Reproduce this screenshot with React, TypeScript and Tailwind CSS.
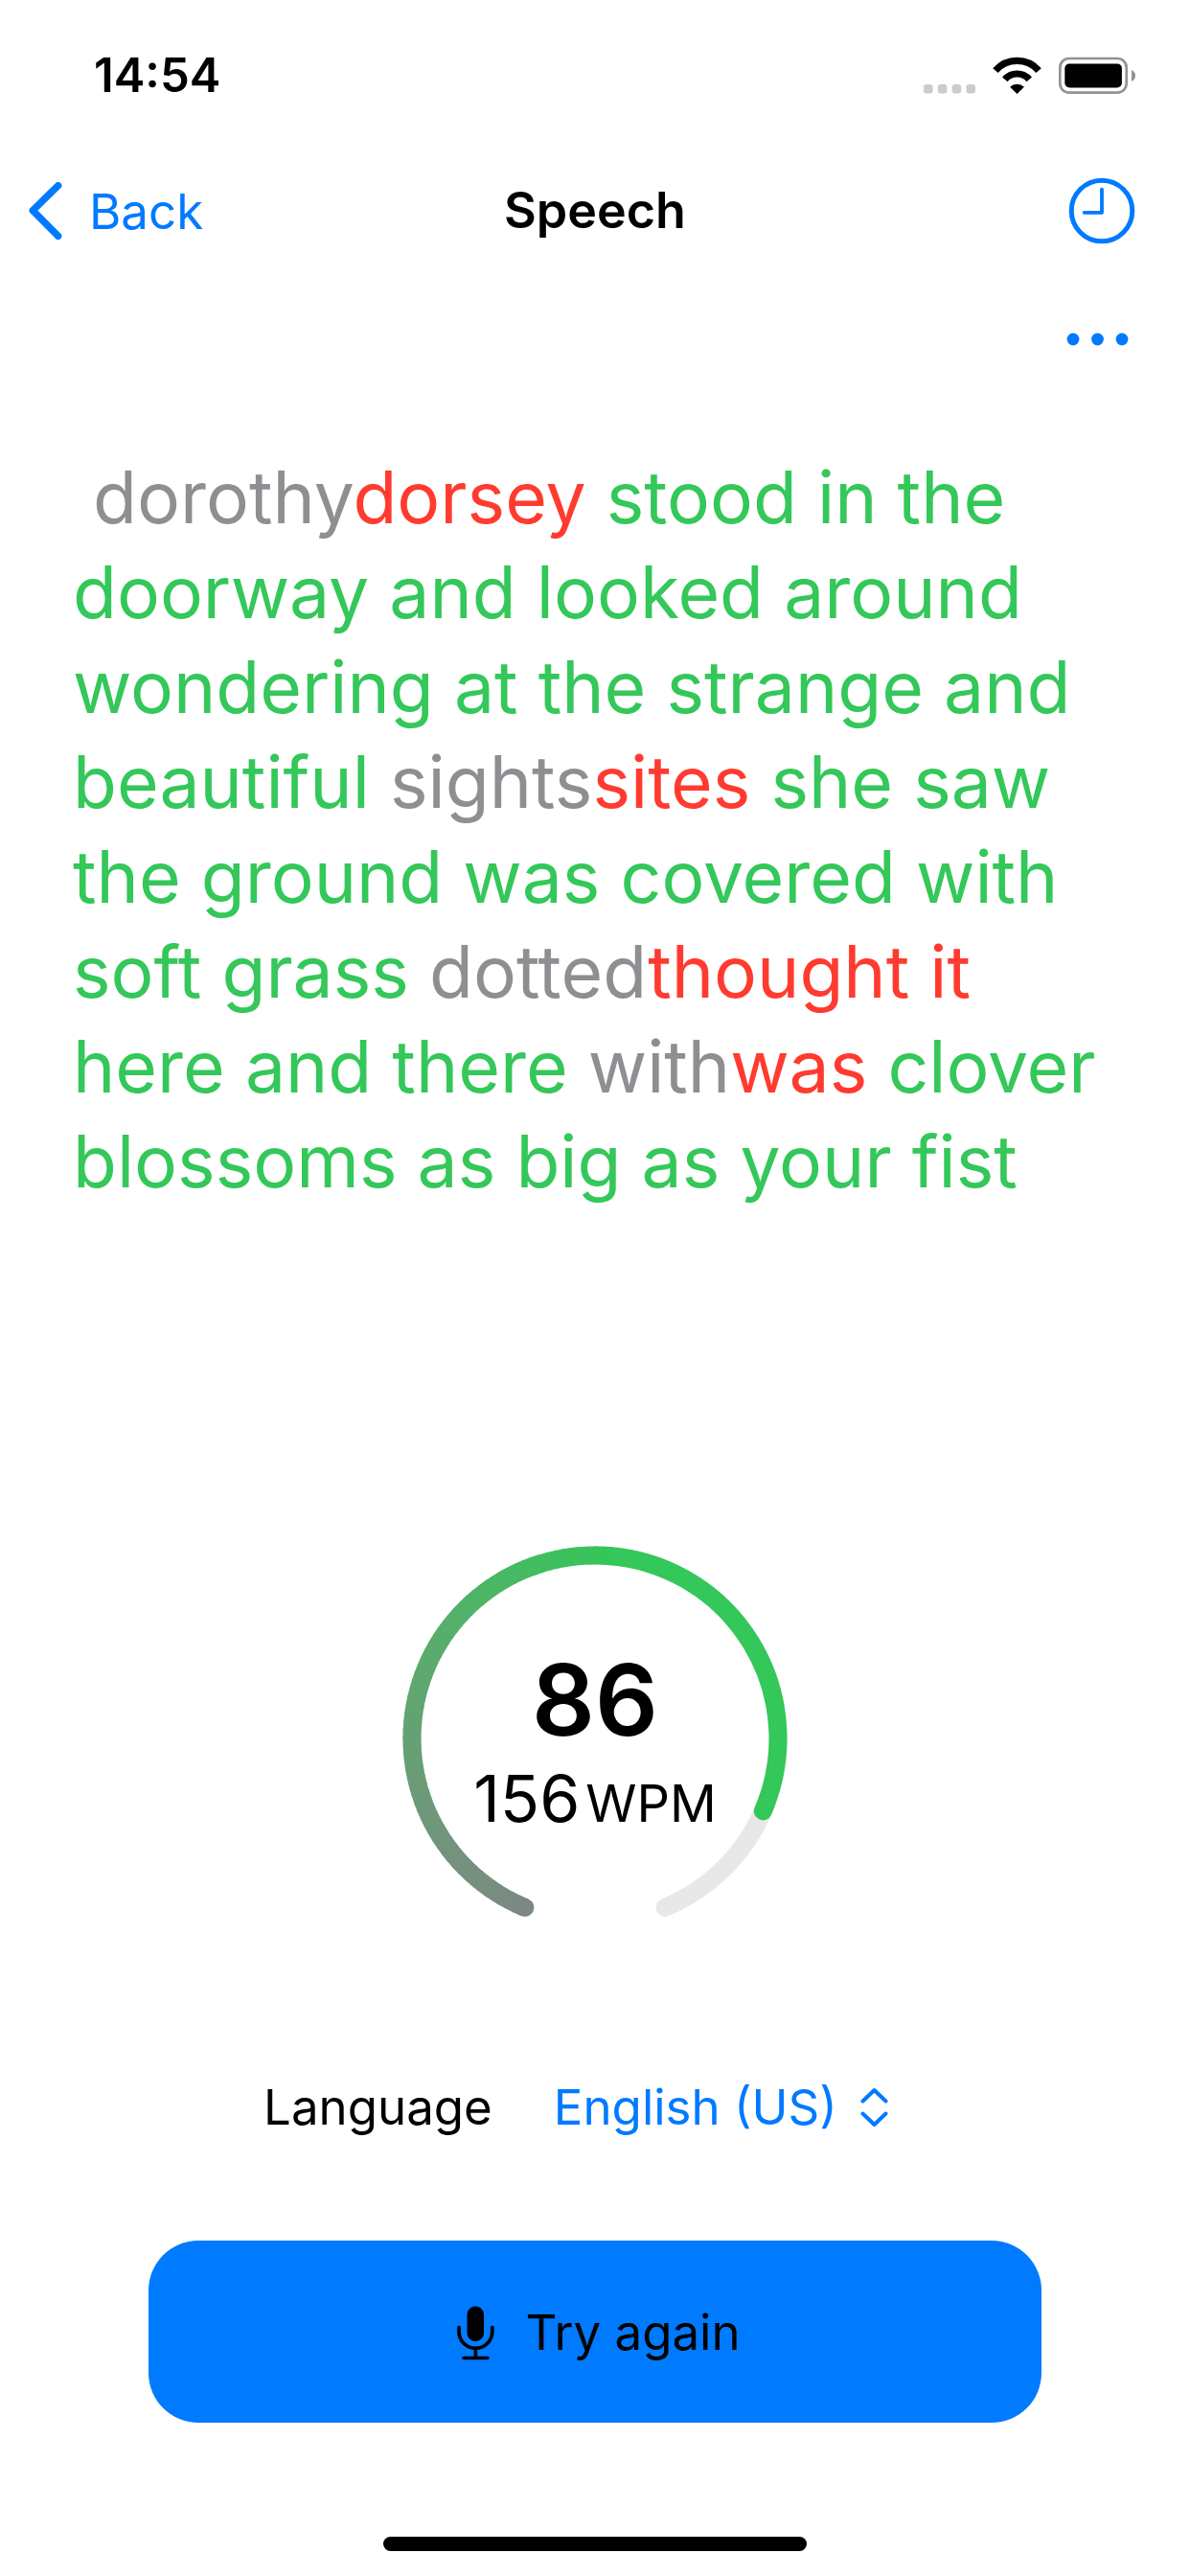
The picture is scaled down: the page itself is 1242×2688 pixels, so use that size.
import React from "react";

type Kind = "match" | "missed" | "heard";
type Segment = { kind: Kind; text: string };

const TRANSCRIPT: Segment[] = [
  { kind: "missed", text: " dorothy" },
  { kind: "heard", text: "dorsey" },
  { kind: "match", text: " stood in the doorway and looked around wondering at the strange and beautiful " },
  { kind: "missed", text: "sights" },
  { kind: "heard", text: "sites" },
  { kind: "match", text: " she saw the ground was covered with soft grass " },
  { kind: "missed", text: "dotted" },
  { kind: "heard", text: "thought it" },
  { kind: "match", text: " here and there " },
  { kind: "missed", text: "with" },
  { kind: "heard", text: "was" },
  { kind: "match", text: " clover blossoms as big as your fist" },
];

const KIND_CLASS: Record<Kind, string> = {
  match: "text-[#34c759]",
  missed: "text-[#8e8e93]",
  heard: "text-[#ff3b30]",
};

function StatusBar() {
  return (
    <div className="flex h-[157px] items-center justify-between pr-[57px] pl-[98px]">
      <time className="text-[49px] leading-none font-semibold">14:54</time>
      <div className="flex items-center gap-[18px]">
        <svg className="h-10 w-[54px]" viewBox="0 0 54 40" fill="#cbcbcb" aria-hidden="true">
          <rect x="0" y="29" width="9.6" height="9.6" rx="3" />
          <rect x="14.8" y="29" width="9.6" height="9.6" rx="3" />
          <rect x="29.6" y="29" width="9.6" height="9.6" rx="3" />
          <rect x="44.4" y="29" width="9.6" height="9.6" rx="3" />
        </svg>
        <svg className="h-10 w-[51px]" viewBox="0 0 51 40" aria-hidden="true">
          <g fill="none" stroke="#000" strokeWidth="7.2">
            <path d="M2.9 14.7A30 30 0 0 1 48.1 14.7" />
            <path d="M12.8 23.9A16.6 16.6 0 0 1 38.2 23.9" />
          </g>
          <path d="M18.1 31.8a10.5 10.5 0 0 1 14.8 0L25.5 38.9z" />
        </svg>
        <svg className="h-10 w-20" viewBox="0 0 80 40" aria-hidden="true">
          <rect x="1.3" y="2" width="69.4" height="35.6" rx="9.5" fill="none" stroke="#929292" strokeWidth="2.6" />
          <rect x="6.3" y="7.4" width="59.6" height="25" rx="5" />
          <path d="M76 14c2.4 1 4 3.2 4 5.9s-1.6 4.9-4 5.9z" fill="#929292" />
        </svg>
      </div>
    </div>
  );
}

function NavBar() {
  return (
    <header className="grid h-[126px] grid-cols-[1fr_auto_1fr] items-center px-[29px]">
      <a href="#back" className="flex items-center gap-7 justify-self-start text-[#007aff]">
        <svg className="h-[60px] w-9" viewBox="0 0 36 60" fill="none" stroke="currentColor" strokeWidth="7.4" strokeLinecap="round" strokeLinejoin="round" aria-hidden="true">
          <path d="M31.7 3.7L5.2 29.7L31.7 56.3" />
        </svg>
        <span className="text-[51px] leading-none">Back</span>
      </a>
      <h1 className="text-[52px] leading-none font-semibold">Speech</h1>
      <button type="button" aria-label="History" className="mr-7 justify-self-end text-[#007aff]">
        <svg className="size-[70px]" viewBox="0 0 70 70" fill="none" stroke="currentColor" aria-hidden="true">
          <circle cx="35" cy="35" r="31.8" strokeWidth="5" />
          <path d="M35 12.7v24.1H16.6" strokeWidth="3.8" strokeLinecap="round" strokeLinejoin="round" />
        </svg>
      </button>
    </header>
  );
}

// Each word is its own span; the whitespace between words stays in the paragraph.
function Transcript() {
  return (
    <p className="w-full px-[76px] text-[75px] leading-[99px] whitespace-pre-wrap">
      {TRANSCRIPT.flatMap((s, i) =>
        s.text.split(/( )/).map((part, j) =>
          part.trim() ? (
            <span key={`${i}-${j}`} className={KIND_CLASS[s.kind]}>
              {part}
            </span>
          ) : (
            part
          ),
        ),
      )}
    </p>
  );
}

const RADIUS = 191;
const START = 112.5;
const SWEEP = 315;

function point(angle: number) {
  const a = (angle * Math.PI) / 180;
  return `${(201 + RADIUS * Math.cos(a)).toFixed(2)} ${(201 + RADIUS * Math.sin(a)).toFixed(2)}`;
}

function arc(from: number, to: number) {
  return `M${point(from)}A${RADIUS} ${RADIUS} 0 ${to - from > 180 ? 1 : 0} 1 ${point(to)}`;
}

// Colour stops around the ring, as [angle, r, g, b].
const STOPS = [
  [112.5, 124, 137, 130],
  [180, 102, 161, 116],
  [225, 82, 179, 105],
  [275, 52, 199, 89],
];

function colorAt(angle: number) {
  for (let i = 1; i < STOPS.length; i++) {
    const a = STOPS[i - 1];
    const b = STOPS[i];
    if (angle <= b[0]) {
      const t = Math.max(0, (angle - a[0]) / (b[0] - a[0]));
      const mix = (k: number) => Math.round(a[k] + (b[k] - a[k]) * t);
      return `rgb(${mix(1)},${mix(2)},${mix(3)})`;
    }
  }
  return "rgb(52,199,89)";
}

function Gauge({ score, wpm }: { score: number; wpm: number }) {
  const end = START + (SWEEP * score) / 100;
  const steps: number[] = [];
  for (let a = START; a < 275; a += 2.5) steps.push(a);
  return (
    <div className="grid size-[402px] place-items-center">
      <svg className="col-start-1 row-start-1 size-full" viewBox="0 0 402 402" fill="none" strokeWidth="19" aria-hidden="true">
        <path d={arc(START, START + SWEEP)} stroke="#e8e8e8" strokeLinecap="round" />
        <path d={arc(START, START + 1)} stroke={colorAt(START)} strokeLinecap="round" />
        <path d={arc(274, end)} stroke={colorAt(end)} strokeLinecap="round" />
        {steps.map((a) => (
          <path key={a} d={arc(a, a + 3)} stroke={colorAt(a + 1)} />
        ))}
      </svg>
      <div className="col-start-1 row-start-1 flex flex-col items-center pt-[18px]">
        <span className="text-[103px] leading-[112px] font-semibold">{score}</span>
        <span className="flex items-baseline gap-1.5 leading-[92px]">
          <span className="text-[68px]">{wpm}</span>
          <span className="text-[54px]">WPM</span>
        </span>
      </div>
    </div>
  );
}

function LanguagePicker() {
  return (
    <div className="flex items-center justify-center pr-10 text-[51px] leading-[60px]">
      <label htmlFor="language">Language</label>
      <div className="ml-16 flex items-center gap-6 text-[#007aff]">
        <select id="language" className="appearance-none bg-transparent p-0 [field-sizing:content]">
          <option>English (US)</option>
        </select>
        <svg className="h-[42px] w-[29px]" viewBox="0 0 29 42" fill="none" stroke="currentColor" strokeWidth="4" strokeLinecap="round" strokeLinejoin="round" aria-hidden="true">
          <path d="M2.5 14.5L14.5 3L26.5 14.5M2.5 27.5L14.5 39L26.5 27.5" />
        </svg>
      </div>
    </div>
  );
}

export default function App() {
  return (
    <div className="flex min-h-screen flex-col bg-white font-['Inter',sans-serif] text-black">
      <StatusBar />
      <NavBar />
      <div className="flex h-[142px] items-center justify-end pr-[63px]">
        <button type="button" aria-label="More" className="text-[#007aff]">
          <svg className="h-4 w-[66px]" viewBox="0 0 66 16" fill="currentColor" aria-hidden="true">
            <circle cx="7" cy="8" r="6.4" />
            <circle cx="32.5" cy="8" r="6.4" />
            <circle cx="58" cy="8" r="6.4" />
          </svg>
        </button>
      </div>
      <main className="flex flex-1 flex-col items-center pt-11">
        <Transcript />
        <div className="mt-auto flex w-full flex-col items-center">
          <Gauge score={86} wpm={156} />
          <div className="mt-[154px]">
            <LanguagePicker />
          </div>
          <button type="button" className="mt-[109px] flex h-[190px] w-3/4 items-center justify-center gap-8 rounded-[52px] bg-[#007aff] pt-0.5 pl-2 text-[51px]">
            <svg className="h-[57px] w-[39px]" viewBox="0 0 39 57" aria-hidden="true">
              <rect x="10.5" y="0.5" width="17.5" height="36.5" rx="8.7" />
              <path d="M2 22.5v4.5a17.4 17.4 0 0 0 34.8 0v-4.5M19.4 45v9.5M7 54.5h24.8" fill="none" stroke="#000" strokeWidth="3.7" strokeLinecap="round" />
            </svg>
            Try again
          </button>
        </div>
      </main>
      <footer className="flex justify-center pt-[119px] pb-[26px]">
        <div className="h-[15px] w-[442px] rounded-full bg-black" />
      </footer>
    </div>
  );
}
